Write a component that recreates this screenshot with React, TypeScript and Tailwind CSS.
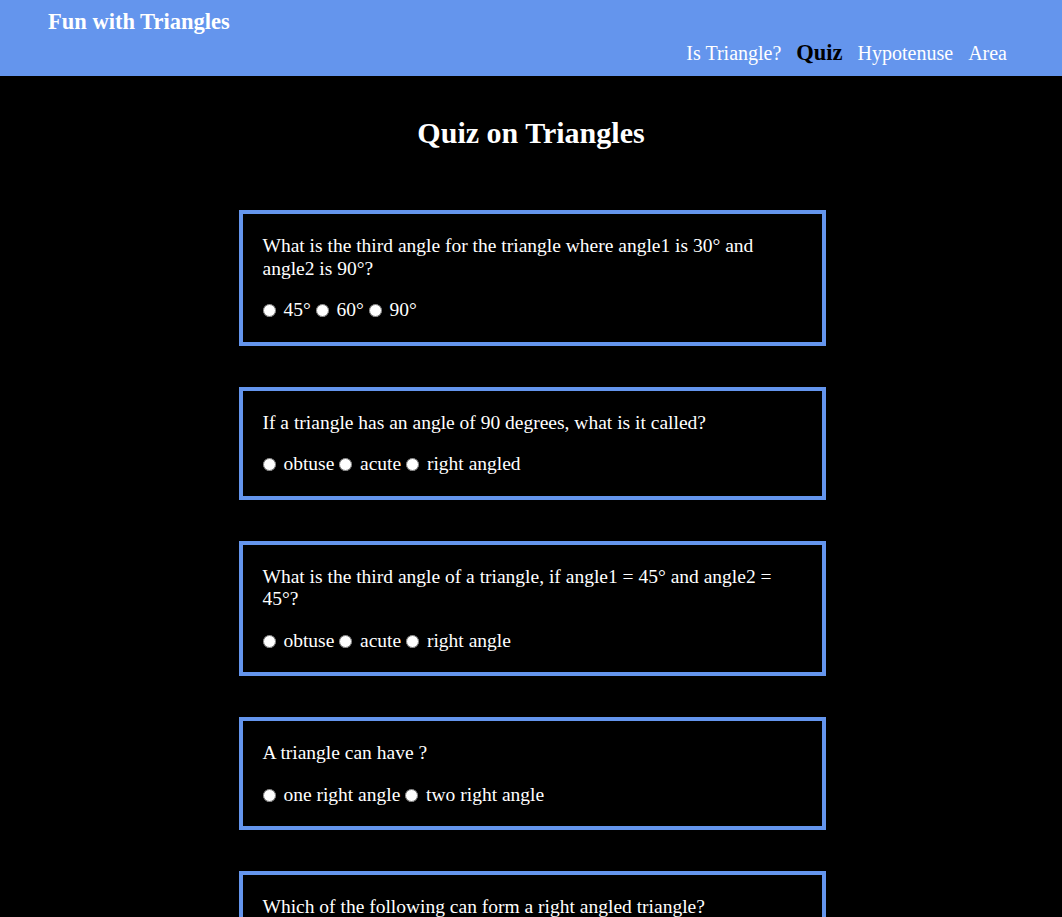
const questions = [
  {
    q: "What is the third angle for the triangle where angle1 is 30° and angle2 is 90°?",
    name: "q1",
    options: ["45°", "60°", "90°"],
  },
  {
    q: "If a triangle has an angle of 90 degrees, what is it called?",
    name: "q2",
    options: ["obtuse", "acute", "right angled"],
  },
  {
    q: "What is the third angle of a triangle, if angle1 = 45° and angle2 = 45°?",
    name: "q3",
    options: ["obtuse", "acute", "right angle"],
  },
  {
    q: "A triangle can have ?",
    name: "q4",
    options: ["one right angle", "two right angle"],
  },
  {
    q: "Which of the following can form a right angled triangle?",
    name: "q5",
    options: ["14, 15, 26", "12, 16, 20", "14, 15, 20"],
  },
]

function Header() {
  return (
    <header className="bg-[#6495ed] h-[76px] pl-[48px] pr-[55px] flex flex-col">
      <div className="pt-[9px] text-[22.5px] font-bold text-white leading-[26px]">Fun with Triangles</div>
      <nav className="flex justify-end items-baseline gap-[15px] mt-[1px] text-[20px] text-white">
        <a href="#">Is Triangle?</a>
        <a href="#" className="text-black font-bold text-[22.5px]">Quiz</a>
        <a href="#">Hypotenuse</a>
        <a href="#">Area</a>
      </nav>
    </header>
  )
}

export default function App() {
  return (
    <div className="min-h-screen bg-black text-white font-['Liberation_Serif',serif]">
      <Header />
      <main className="pb-10">
        <h1 className="text-center text-[30px] font-bold pt-[40px] pb-[60px] leading-[34px]">Quiz on Triangles</h1>
        <div className="flex flex-col items-center gap-[41px] pl-[2px]">
          {questions.map((item) => (
            <div key={item.name} className="w-[587px] border-4 border-[#6495ed] px-5 pt-[21px] pb-5 text-[19.5px] leading-[22.5px]">
              <p className="mb-[19px]">{item.q}</p>
              <div>
                {item.options.map((opt) => (
                  <span key={opt}>
                    <input type="radio" name={item.name} value={opt} className="w-[13px] h-[13px] mr-[3px] align-[-1px]" /> {opt}{" "}
                  </span>
                ))}
              </div>
            </div>
          ))}
        </div>
      </main>
    </div>
  )
}
